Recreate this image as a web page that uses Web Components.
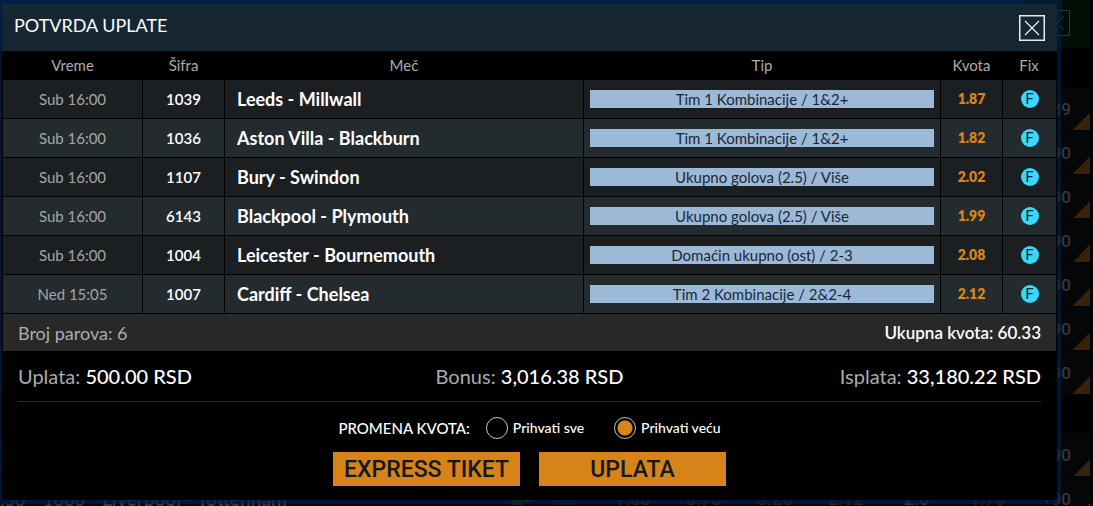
<!DOCTYPE html>
<html lang="sr">
<head>
<meta charset="utf-8">
<title>Potvrda uplate</title>
<style>
  body { margin: 0; background: #000; font-family: Lato, "Open Sans", sans-serif; color: #fff; }
</style>
</head>
<body>
<bet-page>
  <odds-board slot="board"></odds-board>
  <confirm-dialog heading="POTVRDA UPLATE">
    <ticket-table></ticket-table>
    <ticket-summary></ticket-summary>
    <odds-policy></odds-policy>
    <ticket-actions></ticket-actions>
  </confirm-dialog>
</bet-page>

<script>
class Base extends HTMLElement {
  constructor() {
    super();
    this.attachShadow({ mode: 'open' });
  }
  connectedCallback() {
    const t = document.createElement('template');
    t.innerHTML = '<style>:host{display:block} *{box-sizing:border-box}</style>' + this.view();
    this.shadowRoot.replaceChildren(t.content.cloneNode(true));
  }
}

customElements.define('bet-page', class extends Base {
  view() {
    return `<style>
      :host { position: relative; min-height: 100vh; overflow: hidden; }
      .back { position: absolute; inset: 0; overflow: hidden; }
      .front { position: relative; padding: 4px 36px 6px 2px; }
    </style>
    <div class="back"><slot name="board"></slot></div>
    <div class="front"><slot></slot></div>`;
  }
});

/* The dimmed odds list that lies under the dialog */
customElements.define('odds-board', class extends Base {
  view() {
    const row = n => `<div class="row"><span class="more">${n}</span></div>`;
    return `<style>
      :host { margin-right: 3px; font: 500 18px/24px Roboto, sans-serif; color: #36383a; }
      .head { display: flex; height: 48px; background: #001c33; }
      .head .shut { margin-left: auto; width: 67px; padding: 10px 20px; background: #010e06; display: flex; justify-content: flex-end; }
      .gap { height: 39px; background: #000; }
      .gap.mid { height: 38px; }
      .row { display: grid; grid-template-columns: 34px 60px 415px 26px 62px repeat(6, 71px) 1fr; align-items: center; height: 44px; border-bottom: 1px solid #000; background: #040607; white-space: nowrap; }
      .row > * { text-align: center; }
      .row .name { text-align: left; padding-left: 8px; font-family: Lato, sans-serif; font-weight: 700; font-size: 19px; }
      .row .code { font-family: Lato, sans-serif; }
      .row .time { text-align: left; font-family: Lato, sans-serif; }
      .row .odd { color: #3a220a; }
      .more { grid-column: -2; align-self: stretch; display: flex; align-items: center; justify-content: flex-end; padding-right: 19px; font-size: 17px;
        background: linear-gradient(135deg, transparent 50%, #38220a 50%) right bottom / 17px 17px no-repeat; }
      svg { display: block; margin: auto; }
      .head svg { margin: 0; flex: none; }
    </style>
    <div class="head"><div class="shut"><svg width="26" height="26" viewBox="0 0 26 26" fill="none" stroke="#303c34"><path d="M.5.5h25v25H.5zM6 6l14 14M20 6L6 20"/></svg></div></div>
    <div class="gap"></div>
    ${row('+89')}${row('+90').repeat(6)}
    <div class="gap mid"></div>
    ${row('+90')}
    <div class="row">
      <span class="time">:30</span><span class="code">1000</span><span class="name">Liverpool - Tottenham</span>
      <svg width="22" height="12" viewBox="0 0 22 12"><path d="M0 0h12l-3 4 4 8H0z" fill="#12220c"/><path d="M2 6l8-3v3l-6 3z" fill="#2c2c0c"/><path d="M13 7h8v2h-8z" fill="#33200e"/></svg>
      <svg width="26" height="12" viewBox="0 0 26 12" fill="#11161c"><path d="M1 2h6v10H1zM9 2h6v10H9zM17 2h6v10h-6z"/></svg>
      <span class="odd">1.65</span><span class="odd">3.75</span><span class="odd">3.25</span><span class="odd">2.12</span><span>2.5</span><span class="odd">1.70</span>
      <span class="more">+90</span>
    </div>`;
  }
});

customElements.define('confirm-dialog', class extends Base {
  view() {
    return `<style>
      :host { background: #000; box-shadow: 0 0 0 4px rgba(0, 34, 84, .6); }
      header { display: flex; align-items: center; justify-content: space-between; height: 47px; padding: 0 12px; background: #172633; }
      h1 { margin: 0; font: 400 18px/24px Lato, sans-serif; padding-bottom: 5px; }
      button { width: 26px; height: 26px; padding: 0; border: 0; background: none; display: block; }
      svg { display: block; }
    </style>
    <section role="dialog" aria-label="${this.getAttribute('heading')}">
      <header><h1>${this.getAttribute('heading')}</h1>
        <button type="button" aria-label="Zatvori"><svg width="26" height="26" viewBox="0 0 26 26" fill="none" stroke="#e8ecf0"><path stroke-width="1.5" d="M.75.75h24.5v24.5H.75z"/><path stroke-width="1.3" d="M6 6l14 14M20 6L6 20"/></svg></button>
      </header>
      <slot></slot>
    </section>`;
  }
});

customElements.define('ticket-table', class extends Base {
  view() {
    const rows = [
      ['Sub 16:00', '1039', 'Leeds - Millwall', 'Tim 1 Kombinacije / 1&amp;2+', '1.87'],
      ['Sub 16:00', '1036', 'Aston Villa - Blackburn', 'Tim 1 Kombinacije / 1&amp;2+', '1.82'],
      ['Sub 16:00', '1107', 'Bury - Swindon', 'Ukupno golova (2.5) / Više', '2.02'],
      ['Sub 16:00', '6143', 'Blackpool - Plymouth', 'Ukupno golova (2.5) / Više', '1.99'],
      ['Sub 16:00', '1004', 'Leicester - Bournemouth', 'Domaćin ukupno (ost) / 2-3', '2.08'],
      ['Ned 15:05', '1007', 'Cardiff - Chelsea', 'Tim 2 Kombinacije / 2&amp;2-4', '2.12']
    ];
    return `<style>
      :host { padding: 0 1px; }
      table { width: 100%; table-layout: fixed; border-collapse: separate; border-spacing: 0; font-size: 15px; line-height: 18px; text-align: center; }
      .time { width: 140px } .code { width: 82px } .tip { width: 357px } .odds { width: 62px } .fix { width: 53px }
      th { height: 29px; padding: 0 1px 2px 0; font-weight: 400; color: #acacac; }
      td { height: 39px; padding: 0; border-bottom: 1px solid #000; border-right: 1px solid #000; background: #1c1f22; }
      tr:nth-child(even) td { background: #232b2e; }
      td:last-child { border-right: 0; }
      td:nth-child(1) { color: #a4a6a7; }
      td:nth-child(2) { font-weight: 600; }
      td:nth-child(3) { font-weight: 700; font-size: 18px; text-align: left; padding-left: 12px; }
      td:nth-child(4) { padding: 0 6px; }
      td:nth-child(5) { font-size: 14px; font-weight: 800; color: #d8831c; }
      .pick { display: block; background: #9cbad8; color: #1a2836; }
      .badge { display: block; width: 18px; height: 18px; margin: 0 auto; border-radius: 50%; background: #3ad8ff; color: #0c2430; font-size: 15px; line-height: 17px; }
    </style>
    <table>
      <colgroup><col class="time"><col class="code"><col><col class="tip"><col class="odds"><col class="fix"></colgroup>
      <thead><tr><th>Vreme</th><th>Šifra</th><th>Meč</th><th>Tip</th><th>Kvota</th><th>Fix</th></tr></thead>
      <tbody>${rows.map(r => `<tr><td>${r[0]}</td><td>${r[1]}</td><td>${r[2]}</td><td><span class="pick">${r[3]}</span></td><td>${r[4]}</td><td><span class="badge">F</span></td></tr>`).join('')}</tbody>
    </table>`;
  }
});

customElements.define('ticket-summary', class extends Base {
  view() {
    return `<style>
      .totals, .money { display: flex; align-items: center; justify-content: space-between; color: #acacac; }
      .totals { height: 37px; margin: 0 1px; padding: 0 15px; background: #282828; font-size: 18px; line-height: 24px; }
      .totals b { font-size: 17px; font-weight: 600; }
      .money { display: grid; grid-template-columns: 1fr auto 1fr; height: 51px; margin: 0 16px; border-bottom: 1px solid #2c2c2c; font-size: 20px; line-height: 24px; }
      .money :last-child { text-align: right; }
      b { color: #fff; font-weight: 500; }
    </style>
    <div class="totals"><span>Broj parova: 6</span><b>Ukupna kvota: 60.33</b></div>
    <div class="money"><span>Uplata: <b>500.00 RSD</b></span><span>Bonus: <b>3,016.38 RSD</b></span><span>Isplata: <b>33,180.22 RSD</b></span></div>`;
  }
});

customElements.define('odds-policy', class extends Base {
  view() {
    return `<style>
      fieldset { display: flex; justify-content: center; align-items: center; margin: 0; border: 0; padding: 15px 0 13px; font-size: 14px; line-height: 22px; font-weight: 500; }
      .title { font-size: 15px; margin-right: 16px; }
      label { display: flex; align-items: center; gap: 5px; }
      label + label { margin-left: 30px; }
      input { appearance: none; width: 22px; height: 22px; margin: 0; border: 1px solid #c4c4c4; border-radius: 50%; }
      input:checked { background: radial-gradient(circle, #d8831c 7px, transparent 8px); }
    </style>
    <fieldset aria-labelledby="t"><span class="title" id="t">PROMENA KVOTA:</span>
      <label><input type="radio" name="policy">Prihvati sve</label>
      <label><input type="radio" name="policy" checked>Prihvati veću</label>
    </fieldset>`;
  }
});

customElements.define('ticket-actions', class extends Base {
  view() {
    return `<style>
      :host { display: flex; justify-content: center; gap: 19px; padding-bottom: 14px; }
      button { width: 187px; height: 34px; padding: 2px 0 0; border: 0; background: #d8821a; color: #14191d; font: 500 23px/32px Roboto, sans-serif; }
    </style>
    <button type="button">EXPRESS TIKET</button><button type="button">UPLATA</button>`;
  }
});
</script>
</body>
</html>
